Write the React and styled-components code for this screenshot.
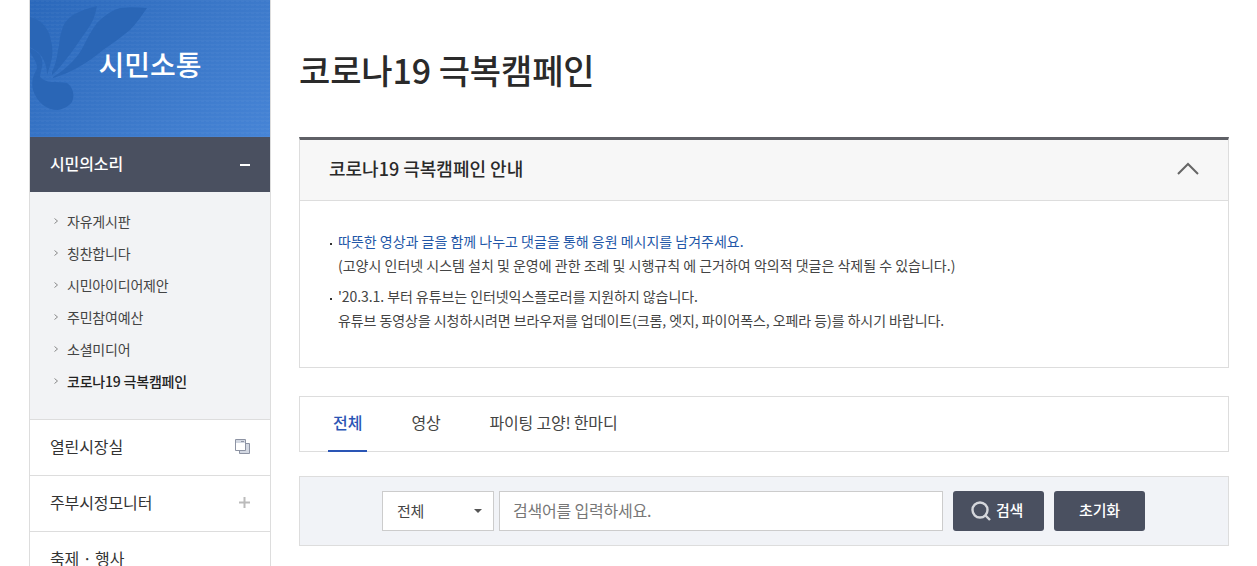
import React from 'react'
import styled, { createGlobalStyle } from 'styled-components'

const GlobalStyle = createGlobalStyle`
  html, body {
    margin: 0;
    height: 100%;
    overflow: hidden;
    background: #fff;
  }
  body {
    font-family: "Noto Sans CJK KR", "Noto Sans", sans-serif;
    color: #333;
  }
  * {
    box-sizing: border-box;
  }
`

const Page = styled.div`
  display: flex;
  align-items: flex-start;
  gap: 28px;
  width: 1257px;
  height: 566px;
  padding-left: 29px;
  overflow: hidden;
`

const Sider = styled.div`
  flex: none;
  width: 242px;
  border-left: 1px solid #ddd;
  border-right: 1px solid #ddd;
`

const Banner = styled.div`
  position: relative;
  display: flex;
  align-items: center;
  justify-content: center;
  height: 137px;
  padding-bottom: 9px;
  background-color: #3a75c6;
  background-image:
    radial-gradient(circle at 50% 0, rgba(255, 255, 255, 0.03) 0 2px, transparent 2.5px),
    linear-gradient(135deg, #2a68bb 0%, #3b78c9 55%, #4684d6 100%);
  background-size: 5px 4px, 100% 100%;
  color: #fff;
  font-size: 28px;
  font-weight: 500;
  overflow: hidden;
`

const BannerLeaf = styled.svg`
  position: absolute;
  left: 0;
  top: 0;
`

const BannerTitle = styled.span`
  position: relative;
`

const ActiveMenu = styled.div`
  display: flex;
  align-items: center;
  justify-content: space-between;
  height: 55px;
  padding: 0 20px 3px 20px;
  background: #4a5060;
  color: #fff;
  font-size: 16px;
  font-weight: 500;
  letter-spacing: -0.1px;
`

const Minus = styled.span`
  display: block;
  width: 10px;
  height: 2px;
  margin-top: 4px;
  background: #fff;
`

const SubMenu = styled.ul`
  list-style: none;
  margin: 0;
  padding: 13px 0 22px 20px;
  height: 227px;
  background: #f2f3f5;
`

const SubItem = styled.li`
  display: flex;
  align-items: center;
  gap: 9px;
  height: 32px;
  color: ${props => (props.$active ? '#222' : '#444')};
  font-size: 14px;
  font-weight: ${props => (props.$active ? 500 : 400)};
  letter-spacing: -0.2px;
`

const Arrow = styled.svg`
  flex: none;
  width: 4px;
  height: 6px;
  margin-left: 4px;
`

const MenuItem = styled.div`
  display: flex;
  align-items: center;
  justify-content: space-between;
  height: 56px;
  padding: 0 20px 3px 20px;
  border-top: 1px solid #ddd;
  color: #333;
  font-size: 16px;
  letter-spacing: -0.1px;
`

const MenuLabel = styled.span`
  white-space: nowrap;
`

const Main = styled.div`
  flex: none;
  width: 930px;
`

const Title = styled.h1`
  margin: 0;
  padding-top: 44px;
  height: 137px;
  color: #2a2a2a;
  font-size: 34px;
  line-height: 52px;
  font-weight: 500;
  letter-spacing: -0.1px;
`

const Panel = styled.section`
  border: 1px solid #ddd;
  border-top: 3px solid #5f6066;
  height: 231px;
`

const PanelHead = styled.div`
  display: flex;
  align-items: center;
  justify-content: space-between;
  height: 61px;
  padding: 0 29px 4px 29px;
  background: #f7f7f7;
  border-bottom: 1px solid #ddd;
  color: #2a2a2a;
  font-size: 18px;
  font-weight: 500;
`

const PanelTitle = styled.span`
  margin-top: -1px;
`

const PanelBody = styled.div`
  display: flex;
  flex-direction: column;
  gap: 7px;
  padding: 28px 29px 0 29px;
  font-size: 14px;
  line-height: 24px;
  color: #444;
`

const Notice = styled.div`
  position: relative;
  padding-left: 9px;
  &::before {
    content: '';
    position: absolute;
    left: 1px;
    top: 14px;
    width: 2px;
    height: 2px;
    background: #333;
  }
`

const NoticeLine = styled.div`
  color: ${props => (props.$highlight ? '#2257a8' : '#444')};
  letter-spacing: ${props => (props.$tight ? '-0.07px' : '0')};
  white-space: nowrap;
`

const Tabs = styled.div`
  display: flex;
  height: 56px;
  margin-top: 28px;
  padding-left: 28px;
  gap: 44px;
  border: 1px solid #ddd;
`

const Tab = styled.div`
  display: flex;
  align-items: center;
  height: 55px;
  padding: 0 ${props => (props.$active ? '5px' : '0')} 4px;
  margin-right: ${props => (props.$spaced ? '5px' : '0')};
  color: ${props => (props.$active ? '#2a55b5' : '#444')};
  border-bottom: 2px solid ${props => (props.$active ? '#2a55b5' : 'transparent')};
  font-size: 16px;
  font-weight: ${props => (props.$active ? 500 : 400)};
  letter-spacing: ${props => (props.$active ? '0' : '-0.2px')};
`

const SearchBar = styled.div`
  display: flex;
  align-items: center;
  justify-content: flex-start;
  height: 70px;
  margin-top: 24px;
  padding-left: 82px;
  background: #f1f3f7;
  border: 1px solid #ddd;
`

const SelectBox = styled.div`
  display: flex;
  align-items: center;
  justify-content: space-between;
  width: 112px;
  height: 40px;
  padding: 0 11px 2px 14px;
  background: #fff;
  border: 1px solid #ccc;
  color: #444;
  font-size: 15px;
  letter-spacing: -0.3px;
`

const Caret = styled.span`
  width: 0;
  height: 0;
  margin-top: 2px;
  border-left: 4px solid transparent;
  border-right: 4px solid transparent;
  border-top: 4px solid #555;
`

const SearchInput = styled.input`
  width: 444px;
  height: 40px;
  margin-left: 5px;
  padding: 0 13px 3px;
  background: #fff;
  border: 1px solid #ccc;
  outline: none;
  font-family: inherit;
  font-size: 16px;
  letter-spacing: -0.2px;
  &::placeholder {
    color: #777;
    opacity: 1;
  }
`

const Button = styled.button`
  display: flex;
  align-items: center;
  justify-content: center;
  gap: 4px;
  width: 91px;
  height: 40px;
  margin-left: 10px;
  padding: 0 0 3px;
  border: 0;
  border-radius: 3px;
  background: #4a5060;
  color: #fff;
  font-family: inherit;
  font-size: 15px;
  font-weight: 500;
  letter-spacing: -0.2px;
`

const SearchIcon = styled.svg`
  margin-top: 3px;
  margin-left: -4px;
`

const subItems = ['자유게시판', '칭찬합니다', '시민아이디어제안', '주민참여예산', '소셜미디어']

const SubArrow = () => (
  <Arrow viewBox="0 0 4 6">
    <path d="M0.5 0.5 L3.5 3 L0.5 5.5" fill="none" stroke="#888" />
  </Arrow>
)

export default function App() {
  return (
    <>
      <GlobalStyle />
      <Page>
        <Sider>
          <Banner>
            <BannerLeaf width="130" height="115" viewBox="0 0 130 115">
              <g fill="#2a66b6">
                <path d="M67 6 C58 8 50 11 43 15 C36 20 33 25 32 30 C29 38 30 44 28 50 C27 58 25 66 22 72 L22 75 C28 70 33 63 37 58 C42 52 46 46 50 40 C55 33 60 26 63 20 C65 15 66 10 67 6 Z" />
                <path d="M117 8 C108 7 98 7 90 8 C80 11 73 17 67 23 C61 31 57 39 53 47 C50 53 46 58 42 62 C36 68 30 73 23 77 L23 78 C32 75 40 72 47 68 C56 63 65 57 73 50 C82 44 91 37 100 30 C106 24 112 15 117 8 Z" />
                <path d="M0 17 C4 18 8 20 12 23 C16 27 19 32 20 37 C22 44 23 50 22 57 C21 63 19 69 17 75 C17 70 16 66 15 63 C13 58 11 55 8 52 C5 50 2 48 0 47 Z" />
                <path d="M0 48 C4 50 8 52 10 55 C12 59 13 63 12 67 C11 71 10 74 10 77 C13 80 16 81 20 82 C26 82 32 82 37 83 C40 85 42 88 43 92 C44 96 43 99 42 102 C38 107 33 109 28 110 C22 110 17 108 13 105 C8 101 5 96 3 90 C2 86 2 82 3 78 C4 74 6 71 7 68 C7 64 5 60 3 57 L0 52 Z" />
              </g>
            </BannerLeaf>
            <BannerTitle>시민소통</BannerTitle>
          </Banner>
          <ActiveMenu>
            시민의소리
            <Minus />
          </ActiveMenu>
          <SubMenu>
            {subItems.map(v => (
              <SubItem key={v}>
                <SubArrow />
                {v}
              </SubItem>
            ))}
            <SubItem $active>
              <SubArrow />
              코로나19 극복캠페인
            </SubItem>
          </SubMenu>
          <MenuItem>
            <MenuLabel>열린시장실</MenuLabel>
            <svg width="15" height="15" viewBox="0 0 15 15">
              <path d="M4.5 4.5 H14.5 V14.5 H4.5 Z" fill="#d3d8e2" stroke="#8d93a3" />
              <path d="M0.5 0.5 H10.5 V11.5 H0.5 Z" fill="#fff" stroke="#8d93a3" />
              <path d="M1 1 H10 V4 H1 Z" fill="#d3d8e2" />
              <path d="M6 2.5 H9" stroke="#8d93a3" />
            </svg>
          </MenuItem>
          <MenuItem>
            <MenuLabel>주부시정모니터</MenuLabel>
            <svg width="11" height="11" viewBox="0 0 11 11" fill="#bbb">
              <path d="M4.5 0 H6.5 V4.5 H11 V6.5 H6.5 V11 H4.5 V6.5 H0 V4.5 H4.5 Z" />
            </svg>
          </MenuItem>
          <MenuItem>
            <MenuLabel>축제 · 행사</MenuLabel>
          </MenuItem>
        </Sider>
        <Main>
          <Title>코로나19 극복캠페인</Title>
          <Panel>
            <PanelHead>
              <PanelTitle>코로나19 극복캠페인 안내</PanelTitle>
              <svg width="22" height="13" viewBox="0 0 22 13" fill="none" stroke="#666" strokeWidth="2">
                <path d="M1 12 L11 2 L21 12" />
              </svg>
            </PanelHead>
            <PanelBody>
              <Notice>
                <NoticeLine $highlight>따뜻한 영상과 글을 함께 나누고 댓글을 통해 응원 메시지를 남겨주세요.</NoticeLine>
                <NoticeLine>(고양시 인터넷 시스템 설치 및 운영에 관한 조례 및 시행규칙 에 근거하여 악의적 댓글은 삭제될 수 있습니다.)</NoticeLine>
              </Notice>
              <Notice>
                <NoticeLine $tight>'20.3.1. 부터 유튜브는 인터넷익스플로러를 지원하지 않습니다.</NoticeLine>
                <NoticeLine $tight>유튜브 동영상을 시청하시려면 브라우저를 업데이트(크롬, 엣지, 파이어폭스, 오페라 등)를 하시기 바랍니다.</NoticeLine>
              </Notice>
            </PanelBody>
          </Panel>
          <Tabs>
            <Tab $active>전체</Tab>
            <Tab $spaced>영상</Tab>
            <Tab>파이팅 고양! 한마디</Tab>
          </Tabs>
          <SearchBar>
            <SelectBox>
              전체
              <Caret />
            </SelectBox>
            <SearchInput placeholder="검색어를 입력하세요." readOnly />
            <Button>
              <SearchIcon width="22" height="22" viewBox="0 0 22 22" fill="none" stroke="#d5d7dc" strokeWidth="2.4">
                <circle cx="10" cy="10" r="7.5" />
                <path d="M15.5 15.5 L20 20" />
              </SearchIcon>
              검색
            </Button>
            <Button>초기화</Button>
          </SearchBar>
        </Main>
      </Page>
    </>
  )
}
